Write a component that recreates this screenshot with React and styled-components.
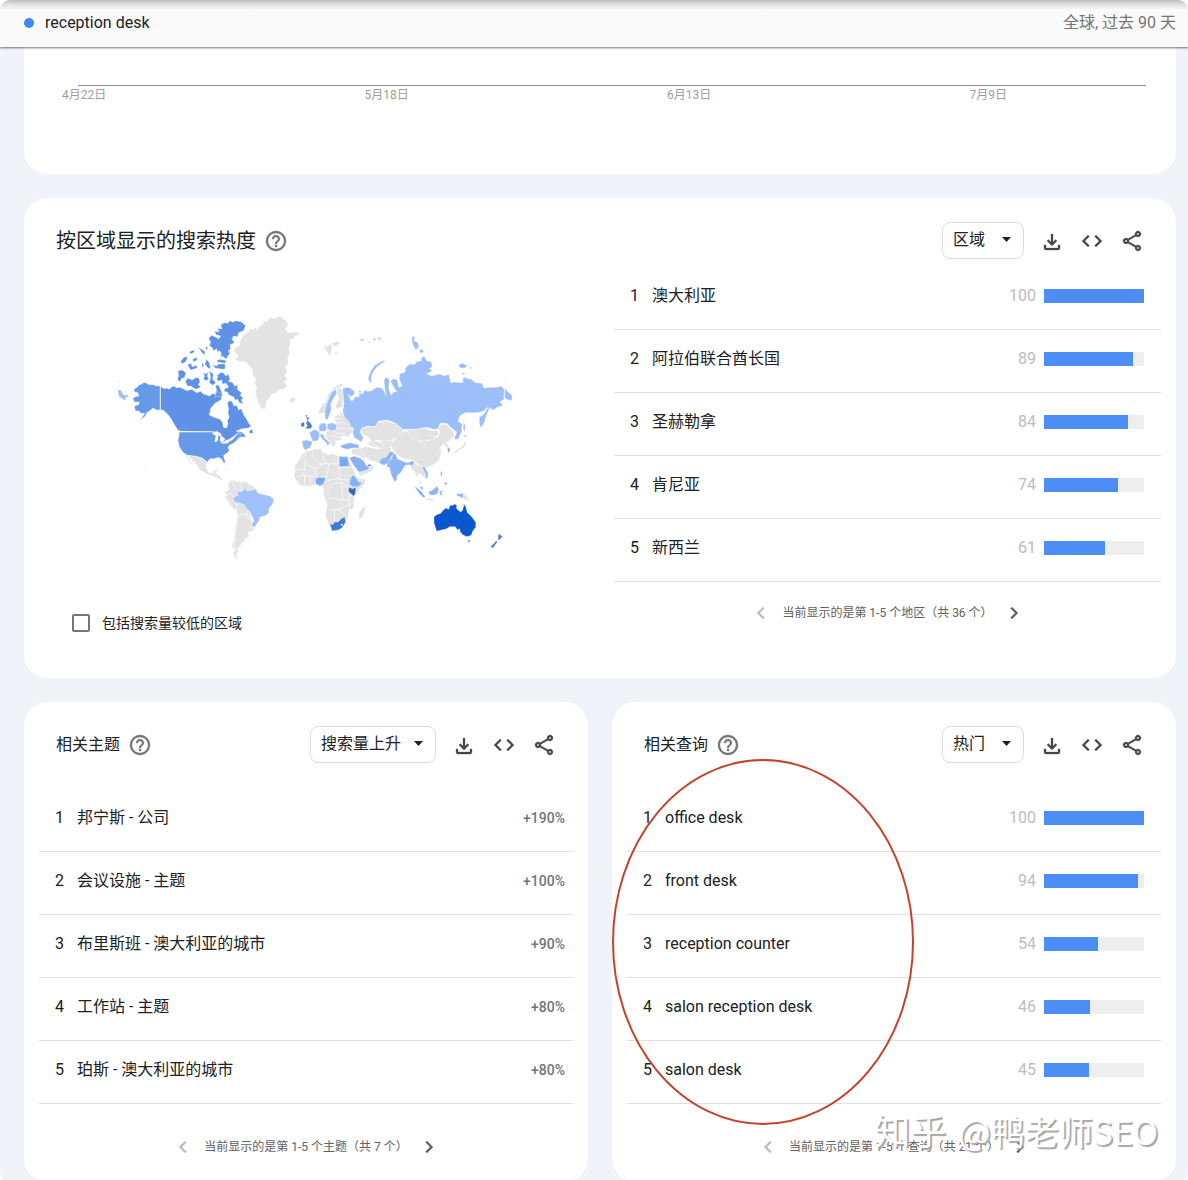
import React from "react";
import styled, { createGlobalStyle } from "styled-components";

const GlobalStyle = createGlobalStyle`
  *, *::before, *::after { box-sizing: border-box; }
  body {
    margin: 0;
    background: #fff;
    color: #202124;
    font-family: Roboto, "Noto Sans CJK SC", sans-serif;
    font-size: 16px;
    line-height: 24px;
  }
`;

const Page = styled.div`
  position: relative;
  min-height: 100vh;
  border-radius: 10px;
  overflow: hidden;
  background: #f0f3f8;
`;

const TopBar = styled.header`
  position: relative;
  z-index: 1;
  display: flex;
  align-items: center;
  justify-content: space-between;
  height: 47px;
  padding: 0 12px 2px 24px;
  background: linear-gradient(#bdbdbd, #dedede 4px, #fafafa 10px);
  box-shadow: 0 1px 2px rgba(0, 0, 0, 0.55);
`;

const Term = styled.span`
  display: flex;
  align-items: center;
  gap: 11px;
`;

const Dot = styled.span`
  width: 10px;
  height: 10px;
  border-radius: 50%;
  background: #4285f4;
`;

const Scope = styled.span`
  color: #757575;
`;

const Content = styled.main`
  display: grid;
  grid-template-columns: minmax(0, 1fr) minmax(0, 1fr);
  gap: 24px;
  padding: 0 12px 0 24px;
`;

const Card = styled.section`
  position: relative;
  grid-column: ${(p) => (p.$wide ? "1 / -1" : "auto")};
  border-radius: ${(p) => (p.$cut ? "0 0 24px 24px" : "24px")};
  background: #fff;
`;

const Timeline = styled.div`
  padding: 38px 30px 70px 38px;
`;

const Axis = styled.div`
  margin-left: 16px;
  border-top: 1px solid #8f8f8f;
`;

const Dates = styled.div`
  display: flex;
  justify-content: space-between;
  padding-right: 139px;
  color: #9e9e9e;
  font-size: 12px;
  line-height: 18px;
`;

const CardHead = styled.div`
  display: flex;
  align-items: center;
  height: 87px;
  padding: 0 24px 2px 32px;
`;

const Title = styled.h2`
  margin: 0;
  font-size: ${(p) => (p.$large ? "20px" : "16px")};
  font-weight: 400;
`;

const IconButton = styled.button`
  display: flex;
  align-items: center;
  justify-content: center;
  width: 40px;
  height: 40px;
  padding: 0;
  border: 0;
  background: none;
  color: ${(p) => (p.$muted ? "#757575" : "#444746")};
`;

const Tools = styled.div`
  display: flex;
  align-items: center;
  margin-left: auto;
`;

const Picker = styled.div`
  position: relative;
  margin-right: 8px;
`;

const Select = styled.select`
  appearance: none;
  display: block;
  min-width: 82px;
  height: 37px;
  padding: 0 33px 2px 10px;
  border: 1px solid #dadce0;
  border-radius: 8px;
  background: #fff;
  color: #202124;
  font: inherit;
`;

const Caret = styled.svg`
  position: absolute;
  right: 13px;
  top: 15px;
  pointer-events: none;
`;

const RegionBody = styled.div`
  display: grid;
  grid-template-columns: 590px minmax(0, 1fr);
  padding-right: 15px;

  > div:last-child {
    margin-top: -18px;
  }
`;

const MapColumn = styled.div`
  display: flex;
  flex-direction: column;
  align-items: flex-start;
  padding: 15px 0 43px 48px;
`;

const MapDrawing = styled.svg`
  margin-left: 28px;
`;

const CheckRow = styled.label`
  display: flex;
  align-items: center;
  gap: 12px;
  margin-top: 31px;
  font-size: 14px;
`;

const Check = styled.input`
  appearance: none;
  width: 18px;
  height: 18px;
  margin: 0;
  border: 2px solid #757575;
  border-radius: 2px;
`;

const ListArea = styled.div`
  padding: ${(p) => (p.$inset ? "0 15px" : "0")};
`;

const Rows = styled.ol`
  margin: 0;
  padding: 0;
  list-style: none;
`;

const Row = styled.li`
  display: flex;
  align-items: center;
  height: 63px;
  padding: 0 ${(p) => (p.$tight ? "8px" : "17px")} 4px 16px;
  border-bottom: 1px solid #e0e0e0;
`;

const Rank = styled.span`
  width: 22px;
`;

const Name = styled.span`
  flex: 1;
`;

const Value = styled.span`
  margin-right: 8px;
  color: #bdbdbd;
`;

const Track = styled.span`
  width: 100px;
  height: 14px;
  background: #eee;
`;

const Fill = styled.span`
  display: block;
  height: 100%;
  background: #4c8df6;
`;

const Rise = styled.span`
  color: #757575;
  font-size: 14px;
  font-weight: 500;
`;

const Pager = styled.nav`
  display: flex;
  align-items: center;
  justify-content: center;
  gap: 3px;
  height: ${(p) => (p.$short ? "62px" : "78px")};
  padding-top: ${(p) => (p.$short ? "0" : "8px")};
  color: #616161;
  font-size: 12px;
  font-weight: 400;
`;

const PageButton = styled.button`
  display: flex;
  align-items: center;
  justify-content: center;
  width: 36px;
  height: 36px;
  padding: 0;
  border: 0;
  background: none;
  color: ${(p) => (p.disabled ? "#bdbdbd" : "#616161")};
`;

const Ring = styled.svg`
  position: absolute;
  left: -1px;
  top: 56px;
  pointer-events: none;
`;

const Watermark = styled.div`
  position: absolute;
  right: 30px;
  bottom: 27px;
  display: flex;
  align-items: baseline;
  gap: 12px;
  color: #fff;
  font-family: "Noto Sans CJK SC", sans-serif;
  font-size: 34px;
  line-height: 48px;
  text-shadow: 2px 2px 1px #a6a6a6;
  pointer-events: none;
`;

const WatermarkBrand = styled.span`
  font-size: 36px;
`;

const glyphs = {
  help: "M11 18h2v-2h-2v2zm1-16C6.48 2 2 6.48 2 12s4.480 10 10 10 10-4.480 10-10S17.520 2 12 2zm0 18c-4.410 0-8-3.590-8-8s3.590-8 8-8 8 3.590 8 8-3.590 8-8 8zm0-14c-2.210 0-4 1.790-4 4h2c0-1.100.900-2 2-2s2 .900 2 2c0 2-3 1.750-3 5h2c0-2.250 3-2.500 3-5 0-2.210-1.790-4-4-4z",
  download:
    "M12 17l-5-5 1.400-1.450 2.600 2.600V5h2v8.150l2.600-2.600L17 12l-5 5zM6 21q-.825 0-1.413-.587Q4 19.825 4 19v-3h2v3h12v-3h2v3q0 .825-.587 1.413Q18.825 21 18 21z",
  code: "M9.400 16.600L4.800 12l4.600-4.600L8 6l-6 6 6 6 1.400-1.400zm5.200 0l4.600-4.600-4.600-4.600L16 6l6 6-6 6-1.400-1.400z",
  share:
    "M18 16.08c-.76 0-1.44.3-1.96.77L8.91 12.7c.05-.23.09-.46.09-.7s-.04-.47-.09-.7l7.05-4.11c.54.5 1.25.81 2.04.81 1.66 0 3-1.34 3-3s-1.34-3-3-3-3 1.34-3 3c0 .24.04.47.09.7L8.04 9.81C7.5 9.31 6.79 9 6 9c-1.66 0-3 1.34-3 3s1.34 3 3 3c.79 0 1.5-.31 2.04-.81l7.12 4.16c-.05.21-.08.43-.08.65 0 1.61 1.31 2.92 2.92 2.92s2.92-1.31 2.92-2.92-1.31-2.92-2.92-2.92zM18 4c.55 0 1 .45 1 1s-.45 1-1 1-1-.45-1-1 .45-1 1-1zM6 13c-.55 0-1-.45-1-1s.45-1 1-1 1 .45 1 1-.45 1-1 1zm12 7.02c-.55 0-1-.45-1-1s.45-1 1-1 1 .45 1 1-.45 1-1 1z",
  prev: "M15.41 7.41L14 6l-6 6 6 6 1.41-1.41L10.83 12z",
  next: "M8.59 16.59L10 18l6-6-6-6-1.41 1.41L13.17 12z",
};

function Glyph({ name }) {
  return (
    <svg width="24" height="24" viewBox="0 0 24 24" fill="currentColor" stroke="currentColor" strokeWidth="0.3" aria-hidden="true">
      <path d={glyphs[name]} />
    </svg>
  );
}

function Header({ title, large, option }) {
  return (
    <CardHead>
      <Title $large={large}>{title}</Title>
      <IconButton $muted aria-label="帮助">
        <Glyph name="help" />
      </IconButton>
      <Tools>
        <Picker>
          <Select aria-label={title}>
            <option>{option}</option>
          </Select>
          <Caret width="9" height="5" viewBox="0 0 9 5" aria-hidden="true">
            <path d="M0 0h9L4.500 5z" fill="#202124" />
          </Caret>
        </Picker>
        <IconButton aria-label="下载">
          <Glyph name="download" />
        </IconButton>
        <IconButton aria-label="嵌入">
          <Glyph name="code" />
        </IconButton>
        <IconButton aria-label="分享">
          <Glyph name="share" />
        </IconButton>
      </Tools>
    </CardHead>
  );
}

function BarRows({ items }) {
  return (
    <Rows>
      {items.map(([name, value], i) => (
        <Row key={name}>
          <Rank>{i + 1}</Rank>
          <Name>{name}</Name>
          <Value>{value}</Value>
          <Track>
            <Fill style={{ width: `${value}%` }} />
          </Track>
        </Row>
      ))}
    </Rows>
  );
}

function Paging({ children, short }) {
  return (
    <Pager $short={short}>
      <PageButton disabled aria-label="上一页">
        <Glyph name="prev" />
      </PageButton>
      <span>{children}</span>
      <PageButton aria-label="下一页">
        <Glyph name="next" />
      </PageButton>
    </Pager>
  );
}

const LAND = "#e3e3e3";

// Each sheet covers one quarter of the map and is drawn at three times its final size.
const sheets = [
  {
    origin: [100, 300],
    shapes: [
      ["#6799e9", "181,258 170,258 160,254 148,254 140,250 132,247 126,252 118,254 112,262 101,268 104,276 114,278 116,288 106,290 98,296 104,306 118,306 116,314 103,318 106,332 118,334 122,340 134,340 128,350 118,362 134,350 142,336 150,332 158,324 170,330 181,330"],
      ["#5f92e6", "181,258 192,266 200,264 208,268 216,260 225,258 228,264 240,262 262,272 275,268 290,278 302,274 310,282 330,288 338,280 345,284 350,270 346,255 356,256 360,264 368,285 362,300 345,310 332,325 328,345 342,352 360,358 368,368 370,382 380,384 384,372 382,362 388,350 384,340 386,328 382,310 388,302 396,304 402,318 410,316 416,330 424,326 430,342 440,358 446,370 454,378 445,384 425,386 408,394 425,396 434,404 436,412 424,410 415,416 412,404 398,412 384,420 372,420 360,405 345,396 240,394 232,388 222,372 214,358 205,345 190,330 181,330"],
      ["#6799e9", "238,396 338,396 352,400 366,412 380,424 396,420 412,404 426,398 412,420 400,430 390,434 384,442 388,452 380,460 371,466 372,474 376,486 372,490 364,476 354,472 345,476 330,476 322,486 314,480 306,474 290,470 280,468 262,466 248,456 238,440 234,420 237,408"],
      [LAND, "262,466 290,469 306,474 314,482 322,486 318,500 324,516 336,520 342,510 352,512 348,522 356,528 368,538 358,536 342,530 322,522 300,510 290,494 275,478"],
      [LAND, "256,464 262,468 272,484 280,498 270,488"],
      [LAND, "510,52 522,56 540,48 548,56 560,62 566,78 556,84 562,96 575,98 590,95 598,103 584,108 580,116 568,118 572,130 566,145 570,160 562,175 566,190 556,200 562,215 554,225 562,240 552,244 562,258 550,268 534,270 526,280 515,282 506,296 500,302 494,328 484,324 476,310 470,295 466,275 470,262 464,250 468,236 458,225 456,208 446,196 438,186 415,184 405,178 416,168 402,156 404,146 420,134 420,122 430,105 444,96 450,86 462,90 462,78 472,90 476,80 490,72 490,60 500,66"],
      [LAND, "565,294 572,298 578,290 588,296 584,304 572,308"],
      ["#5f92e6", "372,68 384,70 388,63 400,66 408,62 425,66 437,78 430,92 416,98 412,110 400,108 396,118 404,128 390,134 392,146 385,152 390,160 384,168 378,178 368,168 362,172 364,160 358,152 352,156 350,146 340,152 336,142 328,138 332,126 326,116 334,106 345,110 356,116 362,108 348,104 344,94 358,96 352,86 366,86 362,76"],
      ["#5f92e6", "350,182 360,178 380,182 374,190 352,186"],
      ["#5f92e6", "338,194 350,198 356,192 375,192 376,206 366,208 345,204"],
      ["#5f92e6", "234,212 246,210 258,218 254,232 244,236 240,246 232,238 236,228"],
      ["#5f92e6", "256,244 264,234 276,240 290,232 298,236 300,248 294,252 302,262 288,268 272,258 262,258"],
      ["#5f92e6", "308,218 318,222 326,216 322,228 326,238 318,242 310,236 314,228"],
      ["#5f92e6", "328,212 340,222 338,238 348,248 338,256 328,248 332,232"],
      ["#5f92e6", "346,222 354,226 360,218 370,218 378,228 384,222 390,236 386,244 398,248 404,258 414,256 412,268 426,280 420,286 430,294 424,300 430,312 418,308 412,296 408,302 400,290 388,286 382,276 372,274 374,266 386,262 378,250 366,252 366,240 356,244 350,236 354,230"],
      ["#5f92e6", "352,274 362,280 366,290 354,288 344,292"],
      ["#5f92e6", "294,140 302,146 314,154 316,166 306,158"],
      ["#5f92e6", "242,184 252,172 264,170 258,184 246,192"],
      ["#5f92e6", "262,194 274,190 276,200 290,196 292,204 272,210"],
      ["#5f92e6", "268,156 280,150 284,156 272,162"],
      ["#5f92e6", "320,178 328,188 332,206 324,204 314,192"],
      ["#5f92e6", "278,178 290,172 292,180 280,186"],
      ["#5f92e6", "316,140 324,142 320,152"],
      ["#5f92e6", "306,186 312,196 306,204"],
      ["#5f92e6", "446,396 456,386 460,400 450,400"],
      ["#9cbef9", "53,270 62,270 70,284 84,286 86,292 76,292 78,302 66,296 56,288"],
      [LAND, "54,244 60,244 60,248 54,248"],
      [LAND, "132,509 137,510 136,514"],
      ["#fff", "336,400 350,394 364,402 362,408 354,406 354,420 348,426 344,424 348,408"],
      ["#fff", "362,406 374,416 368,428 360,424"],
      ["#fff", "364,430 378,424 396,418 382,430"],
    ],
    lines: ["181,258 181,331", "238,395 340,395", "372,424 388,420 402,408 424,392"],
  },
  {
    origin: [100, 440],
    shapes: [
      [LAND, "340,100 352,102 362,112 370,120 366,122 350,112"],
      [LAND, "344,92 350,86 358,92 352,91"],
      [LAND, "372,84 382,86 376,89"],
      [LAND, "384,134 390,124 402,120 408,126 424,124 440,126 446,134 460,138 472,150 462,180 450,220 458,256 464,264 456,274 444,276 448,290 434,296 434,304 424,308 422,318 414,324 416,334 410,344 412,354 418,364 406,354 398,340 404,330 396,318 402,296 404,270 410,240 410,212 394,200 384,184 374,172 380,166 374,158 388,148"],
      ["#9fc0fa", "400,176 406,168 414,168 412,152 420,156 430,152 434,142 440,152 452,152 466,148 472,156 476,160 494,164 510,168 522,178 518,192 508,204 506,220 494,228 480,232 476,244 464,262 454,254 462,242 454,224 448,212 438,204 432,194 418,188 404,186"],
    ],
    lines: ["398,120 402,140 412,148", "424,124 420,134 426,152", "376,166 390,160 402,172", "410,188 408,212 414,224 408,260 404,310 406,334", "414,226 430,222 440,226 452,240", "440,226 444,212", "456,254 448,266"],
  },
  {
    origin: [280, 430],
    shapes: [
      [LAND, "66,74 75,66 96,60 122,56 128,66 150,76 154,70 175,78 205,80 212,98 222,122 230,144 258,148 254,162 238,180 224,198 222,214 222,232 206,244 206,256 196,276 180,296 155,302 146,282 136,255 142,225 134,202 130,190 132,176 124,168 106,164 94,168 75,168 60,166 48,150 42,138 46,122 44,112 54,92"],
      ["#7ba8f0", "177,79 192,81 202,79 208,109 177,110"],
      ["#7ba8ee", "107,146 118,142 138,144 134,158 120,168 106,160"],
      ["#86b0f4", "212,144 218,136 228,142 234,154 246,160 234,170 218,170 207,162"],
      ["#3568c0", "206,172 218,176 228,172 226,190 222,199 206,186"],
      ["#4179d6", "150,280 158,284 164,276 174,276 184,266 194,260 197,276 188,292 176,300 156,303"],
      ["#fff", "183,283 187,282 188,286 185,288"],
      [LAND, "238,244 246,236 254,228 257,236 250,256 244,266 236,264"],
      [LAND, "214,56 240,54 258,62 262,80 250,86 238,78 216,72"],
      [LAND, "234,126 252,124 268,118 274,106 282,110 278,120 262,130 240,138"],
      ["#8ab1f3", "208,84 222,78 240,84 252,94 258,106 268,110 266,118 250,124 236,126 222,108"],
      ["#4179d6", "263,104 273,102 271,109 265,109"],
      [LAND, "240,56 256,50 280,54 296,58 310,50 330,48 334,62 320,78 300,98 274,92 252,78"],
      [LAND, "392,100 402,98 412,106 432,104 444,124 444,144 436,148 424,134 416,130 412,144 404,126 394,116"],
      [LAND, "410,140 416,150 424,158 424,166 416,158"],
      ["#8fb5f6", "296,98 306,84 318,82 330,64 344,68 334,80 326,98 312,106"],
      ["#8fb5f6", "322,98 334,86 340,70 348,74 352,86 374,96 384,98 396,92 404,96 396,108 388,104 376,106 362,128 352,136 350,150 344,156 334,136 328,112 320,110"],
      ["#8fb5f6", "181,46 196,42 210,38 226,42 236,44 237,54 218,54 202,58 186,54"],
      ["#8fb5f6", "426,112 434,110 444,130 444,140 438,148 438,134"],
      ["#8fb5f6", "402,168 412,174 424,184 436,200 432,204 418,192"],
      ["#8fb5f6", "420,168 428,170 430,180 422,176"],
      ["#8fb5f6", "446,184 458,180 470,168 476,176 472,192 460,196 448,194"],
      ["#b8cff8", "436,204 446,206 464,209 460,212 440,208"],
      ["#8fb5f6", "478,184 490,182 484,188 488,196 480,196"],
      ["#8fb5f6", "482,126 488,124 486,138 482,138"],
      ["#8fb5f6", "492,158 500,156 502,162 494,166"],
      ["#8fb5f6", "528,190 538,192 550,190 550,206 540,200 532,198"],
      [LAND, "552,190 562,200 566,206 576,216 562,210 550,208"],
      ["#0b57d0", "462,260 470,254 482,250 490,240 498,234 506,238 510,226 518,226 524,222 530,226 530,236 542,246 548,240 552,222 558,232 562,248 570,254 578,264 588,278 587,292 578,304 574,316 560,320 548,314 541,306 538,296 532,300 526,290 510,290 496,298 484,300 470,304 466,292 462,278"],
      ["#3f74cc", "562,330 571,331 567,339"],
      ["#4b7fce", "656,310 660,314 668,318 662,326 655,332 654,324"],
      ["#4b7fce", "648,332 653,336 646,344 640,354 631,350 640,342"],
    ],
    lines: ["74,66 78,74 52,94", "100,60 98,80 126,104 136,98", "128,66 130,88 144,102 176,100", "177,80 177,130", "74,92 74,120 50,118", "78,100 104,116 110,140", "104,116 136,98", "146,104 142,134 132,160", "177,112 209,112", "178,130 180,148 206,150", "142,152 178,144", "62,126 74,134 74,166", "90,136 90,166", "142,180 160,160 184,158 206,172", "184,158 188,186 186,208 208,212", "142,206 168,204 188,212", "142,238 176,240 196,228 222,218", "164,240 164,274", "176,240 198,256", "206,186 222,208", "52,140 74,136 104,140", "206,196 208,242"],
  },
  {
    origin: [280, 300],
    shapes: [
      [LAND, "118,330 128,312 136,308 145,284 160,264 178,252 190,252 186,260 168,266 156,276 148,292 142,310 136,334 122,342 114,338"],
      ["#9cbef9", "136,358 134,336 140,312 146,296 154,278 166,268 171,280 160,296 152,312 154,328 148,346 142,360"],
      [LAND, "168,268 182,264 190,274 190,302 186,322 172,328 166,318 174,304 176,290"],
      [LAND, "164,350 186,336 198,352 218,372 222,394 210,402 206,412 190,406 178,412 164,402 168,372"],
      [LAND, "140,394 166,392 180,406 184,420 166,422 168,434 158,440 150,426 136,408"],
      ["#9cbef9", "142,372 156,368 170,374 168,390 152,392 142,386"],
      ["#9cbef9", "116,378 124,370 138,370 140,388 134,394 118,394"],
      ["#9cbef9", "88,398 104,388 118,396 118,408 114,422 98,424"],
      ["#9cbef9", "66,422 80,420 98,426 90,444 76,450 70,444"],
      ["#9cbef9", "118,404 130,402 134,414 152,430 146,432 144,440 138,428 124,414"],
      ["#9cbef9", "188,264 206,262 222,272 224,282 212,290 204,282 210,296 216,304 226,290 238,290 236,282 250,280 254,270 262,274 275,272 290,262 304,264 312,272 318,288 314,262 312,240 320,230 328,240 326,268 334,286 340,276 350,276 338,256 332,244 340,236 352,240 356,262 366,258 358,238 358,222 376,216 376,204 390,192 402,194 412,184 424,182 424,174 432,168 440,182 455,186 456,200 448,206 458,212 440,222 456,228 478,222 494,228 506,222 512,248 526,246 548,248 550,232 574,238 586,248 606,250 612,264 632,262 652,262 662,258 672,266 672,298 660,306 670,316 652,322 640,330 622,322 610,334 594,338 555,338 540,348 534,364 546,372 545,396 534,418 522,418 530,396 514,384 500,370 480,370 474,386 460,388 440,382 410,388 385,388 368,388 345,368 320,360 296,364 285,380 262,378 246,384 240,396 250,412 244,426 222,412 218,398 222,386 212,378 206,364 194,352 188,334 192,312"],
      ["#9cbef9", "674,264 682,274 696,286 696,302 686,300 674,294"],
      ["#9cbef9", "598,352 612,342 624,322 628,326 618,350 612,370 602,384 598,370"],
      ["#9cbef9", "550,364 556,378 554,398 550,388"],
      ["#9cbef9", "268,246 264,234 272,214 284,196 300,186 316,180 312,186 294,198 280,214 274,230 274,248"],
      ["#9cbef9", "396,108 405,112 402,122 414,128 416,140 408,150 400,138 396,124"],
      ["#9cbef9", "418,152 426,146 432,156 422,160"],
      ["#9cbef9", "536,194 546,190 562,196 556,204 540,204"],
      ["#9cbef9", "568,200 578,204 570,206"],
      ["#9cbef9", "546,216 556,222 548,224"],
      ["#9cbef9", "236,270 246,276 238,280"],
      ["#b9d0f8", "240,116 254,117 250,123 242,122"],
      ["#b9d0f8", "264,122 272,126 266,129"],
      ["#b9d0f8", "278,112 290,118 282,124"],
      ["#b9d0f8", "292,112 306,114 298,122"],
      [LAND, "132,136 142,140 150,130 158,142 154,158 148,170 142,156 136,148"],
      [LAND, "156,128 176,124 180,130 168,140 160,138"],
      [LAND, "164,152 174,158 166,164"],
      [LAND, "672,244 680,242 680,248"],
      [LAND, "244,386 262,380 286,382 292,368 318,362 338,370 348,370 370,390 364,400 354,412 340,418 330,426 310,424 290,420 276,428 264,410 248,404"],
      [LAND, "262,430 276,422 300,426 318,420 340,424 348,414 338,436 324,444 298,444 276,440"],
      [LAND, "346,416 372,392 392,400 420,424 450,420 474,410 480,396 474,386 486,372 502,376 518,392 524,408 506,424 490,434 478,444 484,460 476,482 458,496 440,502 424,498 410,490 396,480 372,476 352,466 338,446 330,436"],
      [LAND, "380,390 410,388 436,384 452,392 472,390 476,402 458,418 430,424 404,418 390,406"],
      [LAND, "492,432 500,426 506,440 498,444"],
      ["#8fb5f6", "502,444 508,442 511,454 504,458"],
      ["#dedede", "550,406 560,402 562,410 552,414"],
      ["#dedede", "554,420 558,432 550,444 538,449 527,459 522,456 534,447 546,441 552,430"],
      ["#4b7fce", "76,344 82,346 80,352 88,352 84,362 92,370 97,378 92,386 76,386 82,376 78,370 82,362"],
      ["#4376ca", "63,370 72,366 74,378 64,382"],
      [LAND, "482,446 486,444 486,452 482,450"],
    ],
    lines: ["164,372 190,366 200,376", "168,384 220,388", "166,400 196,400", "150,408 178,412", "170,342 188,346", "166,356 190,356", "276,430 300,444", "300,426 312,438"],
  },
];

function WorldMap() {
  return (
    <MapDrawing width="430" height="280" viewBox="100 300 430 280" role="img" aria-label="按区域显示的搜索热度">
      {sheets.map(({ origin, shapes, lines }) => (
        <g key={origin.join()} transform={`translate(${origin.join(" ")}) scale(0.33333)`} strokeLinejoin="round">
          {shapes.map(([fill, points]) => (
            <polygon key={points} points={points} fill={fill} stroke="#fff" strokeWidth="1" />
          ))}
          {lines.map((points) => (
            <polyline key={points} points={points} fill="none" stroke="#fff" strokeWidth="2" />
          ))}
        </g>
      ))}
    </MapDrawing>
  );
}

const dates = ["4月22日", "5月18日", "6月13日", "7月9日"];

const regions = [
  ["澳大利亚", 100],
  ["阿拉伯联合酋长国", 89],
  ["圣赫勒拿", 84],
  ["肯尼亚", 74],
  ["新西兰", 61],
];

const topics = [
  ["邦宁斯 - 公司", "+190%"],
  ["会议设施 - 主题", "+100%"],
  ["布里斯班 - 澳大利亚的城市", "+90%"],
  ["工作站 - 主题", "+80%"],
  ["珀斯 - 澳大利亚的城市", "+80%"],
];

const queries = [
  ["office desk", 100],
  ["front desk", 94],
  ["reception counter", 54],
  ["salon reception desk", 46],
  ["salon desk", 45],
];

export default function App() {
  return (
    <>
      <GlobalStyle />
      <Page>
        <TopBar>
          <Term>
            <Dot />
            reception desk
          </Term>
          <Scope>全球, 过去 90 天</Scope>
        </TopBar>
        <Content>
          <Card $wide $cut>
            <Timeline>
              <Axis />
              <Dates>
                {dates.map((d) => (
                  <span key={d}>{d}</span>
                ))}
              </Dates>
            </Timeline>
          </Card>

          <Card $wide>
            <Header title="按区域显示的搜索热度" large option="区域" />
            <RegionBody>
              <MapColumn>
                <WorldMap />
                <CheckRow>
                  <Check type="checkbox" />
                  包括搜索量较低的区域
                </CheckRow>
              </MapColumn>
              <ListArea>
                <BarRows items={regions} />
                <Paging short>当前显示的是第 1-5 个地区（共 36 个）</Paging>
              </ListArea>
            </RegionBody>
          </Card>

          <Card>
            <Header title="相关主题" option="搜索量上升" />
            <ListArea $inset>
              <Rows>
                {topics.map(([name, rise], i) => (
                  <Row key={name} $tight>
                    <Rank>{i + 1}</Rank>
                    <Name>{name}</Name>
                    <Rise>{rise}</Rise>
                  </Row>
                ))}
              </Rows>
              <Paging>当前显示的是第 1-5 个主题（共 7 个）</Paging>
            </ListArea>
          </Card>

          <Card>
            <Header title="相关查询" option="热门" />
            <ListArea $inset>
              <BarRows items={queries} />
              <Paging>当前显示的是第 1-5 个查询（共 21 个）</Paging>
            </ListArea>
            <Ring width="304" height="368" viewBox="0 0 304 368" aria-hidden="true">
              <ellipse cx="152" cy="184" rx="150" ry="182" fill="none" stroke="#c5432a" strokeWidth="2" />
            </Ring>
          </Card>
        </Content>
        <Watermark>
          <WatermarkBrand>知乎</WatermarkBrand>
          <span>@鸭老师SEO</span>
        </Watermark>
      </Page>
    </>
  );
}
